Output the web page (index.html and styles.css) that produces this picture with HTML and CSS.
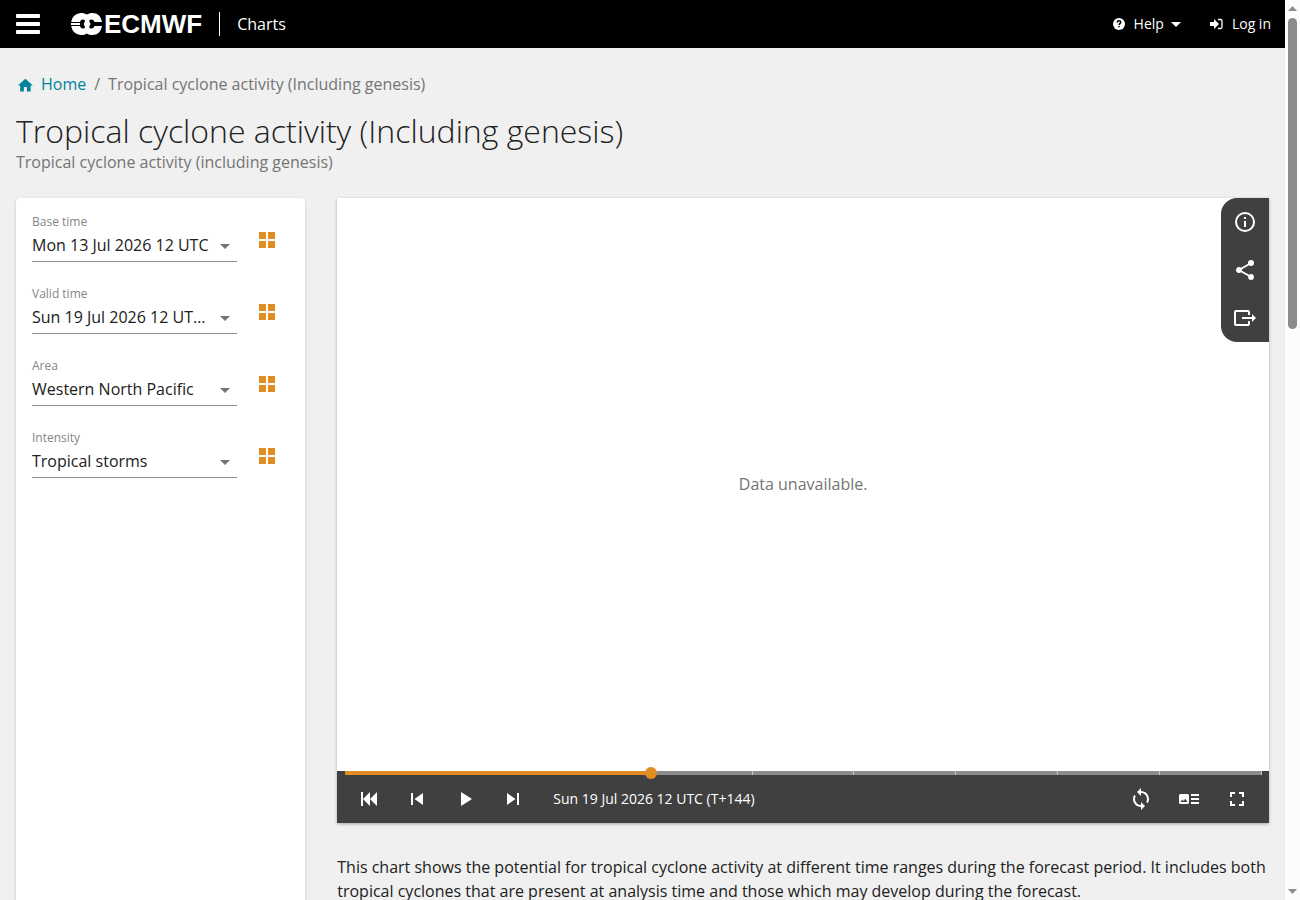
FILE: index.html
```html
<!DOCTYPE html>
<html lang="en">
<head>
<meta charset="UTF-8">
<meta name="viewport" content="width=device-width, initial-scale=1.0">
<title>Tropical cyclone activity (Including genesis) | ECMWF</title>
<link rel="stylesheet" href="styles.css">
</head>
<body>
<div class="page">
<header class="topbar">
  <button class="menu-btn" aria-label="Menu"><span></span><span></span><span></span></button>
  <a class="logo" href="#">
    <svg width="32" height="22" viewBox="0 0 32 22" aria-hidden="true">
      <path fill="#fff" d="M10.500 0c2 0 3.700.6 5.300 1.600C17.400.6 19.300 0 21.300 0 26.500 0 30 3.200 31 9h-7.500C22.800 7.200 21.800 6.500 20.500 6.500c-1.300 0-2 .5-2.300 1.500l1.300 3-1.300 3c.3 1 1 1.500 2.300 1.500 1.300 0 2.300-.7 3-2.500H31c-1 5.800-4.500 9-9.700 9-2 0-3.900-.6-5.500-1.600-1.600 1-3.300 1.600-5.300 1.600C5 22 1 18.500.3 13H9c.6 1.800 1.600 2.500 2.800 2.500 1.200 0 1.900-.5 2.200-1.500l-1.300-3L14 8c-.3-1-1-1.500-2.200-1.500C10.600 6.500 9.600 7.200 9 9H.3C1 3.500 5 0 10.500 0z"/>
      <path fill="#fff" d="M0 10h9v2H0z"/>
    </svg>
    <span>ECMWF</span>
  </a>
  <a class="app-name" href="#">Charts</a>
  <nav class="user-nav">
    <button class="nav-btn">
      <svg width="12" height="12" viewBox="0 0 12 12" aria-hidden="true"><circle cx="6" cy="6" r="6" fill="#fff"/><path d="M4.200 4.600C4.300 3.300 5 2.800 6 2.800s1.800.6 1.800 1.500C7.800 5.400 6.100 5.500 6.100 7" fill="none" stroke="#000" stroke-width="1.500"/><path d="M5.300 7.900h1.500v1.400H5.300z"/></svg>
      Help
      <svg class="caret" width="10" height="5" viewBox="0 0 10 5" aria-hidden="true"><path d="M0 0h10L5 5z" fill="#fff"/></svg>
    </button>
    <a class="nav-btn" href="#">
      <svg width="13" height="12" viewBox="0 0 13 12" aria-hidden="true"><path d="M0 4h4V1l5 5-5 5V8H0z" fill="#fff"/><path d="M8 1.500h2.500Q12 1.500 12 3v6q0 1.500-1.500 1.500H8" fill="none" stroke="#fff" stroke-width="1.300"/></svg>
      Log in
    </a>
  </nav>
</header>

<main>
  <div class="page-head">
    <nav class="breadcrumb">
      <a href="#"><svg width="18" height="18" viewBox="0 0 24 24" aria-hidden="true"><path d="M10.500 22v-6h4v6h5v-8h3l-10-9-10 9h3v8z" fill="currentColor"/></svg>Home</a>
      <span>/</span>
      <span>Tropical cyclone activity (Including genesis)</span>
    </nav>
    <h1>Tropical cyclone activity (Including genesis)</h1>
    <p class="subtitle">Tropical cyclone activity (including genesis)</p>
  </div>

  <div class="columns">
    <div class="side-col">
      <form class="card filters">
        <div class="filter">
          <div class="field">
            <label for="base">Base time</label>
            <select id="base"><option>Mon 13 Jul 2026 12 UTC</option></select>
          </div>
          <button type="button" class="grid-btn" aria-label="All base times"><svg width="24" height="24" viewBox="0 0 24 24"><path d="M4 4h7v7H4zM13 4h7v7h-7zM4 13h7v7H4zM13 13h7v7h-7z" fill="currentColor"/></svg></button>
        </div>
        <div class="filter">
          <div class="field">
            <label for="valid">Valid time</label>
            <select id="valid"><option>Sun 19 Jul 2026 12 UTC (T+144)</option></select>
          </div>
          <button type="button" class="grid-btn" aria-label="All valid times"><svg width="24" height="24" viewBox="0 0 24 24"><path d="M4 4h7v7H4zM13 4h7v7h-7zM4 13h7v7H4zM13 13h7v7h-7z" fill="currentColor"/></svg></button>
        </div>
        <div class="filter">
          <div class="field">
            <label for="area">Area</label>
            <select id="area"><option>Western North Pacific</option></select>
          </div>
          <button type="button" class="grid-btn" aria-label="All areas"><svg width="24" height="24" viewBox="0 0 24 24"><path d="M4 4h7v7H4zM13 4h7v7h-7zM4 13h7v7H4zM13 13h7v7h-7z" fill="currentColor"/></svg></button>
        </div>
        <div class="filter">
          <div class="field">
            <label for="intensity">Intensity</label>
            <select id="intensity"><option>Tropical storms</option></select>
          </div>
          <button type="button" class="grid-btn" aria-label="All intensities"><svg width="24" height="24" viewBox="0 0 24 24"><path d="M4 4h7v7H4zM13 4h7v7h-7zM4 13h7v7H4zM13 13h7v7h-7z" fill="currentColor"/></svg></button>
        </div>
      </form>
    </div>

    <div class="main-col">
      <section class="viewer">
        <div class="chart">
          <p>Data unavailable.</p>
          <div class="tools">
            <button aria-label="Information"><svg width="24" height="24" viewBox="0 0 24 24"><path d="M11 9h2V7h-2zM12 20a8 8 0 1 1 0-16 8 8 0 0 1 0 16zM12 2a10 10 0 1 0 0 20 10 10 0 0 0 0-20zM11 17h2v-6h-2z" fill="currentColor"/></svg></button>
            <button aria-label="Share"><svg width="24" height="24" viewBox="0 0 24 24"><path d="M18 16.080c-.76 0-1.440.3-1.960.77L8.910 12.700c.05-.23.09-.46.09-.7s-.04-.47-.09-.7l7.050-4.110c.54.5 1.250.81 2.040.81a3 3 0 1 0-3-3c0 .24.04.47.09.7L8.040 9.810A3 3 0 1 0 6 15c.79 0 1.500-.31 2.040-.81l7.120 4.150c-.05.21-.08.43-.08.66a2.920 2.920 0 1 0 2.920-2.920z" fill="currentColor"/></svg></button>
            <button aria-label="Export"><svg width="24" height="24" viewBox="0 0 24 24"><path d="M16 9V6Q16 5 15 5H3Q2 5 2 6v12q0 1 1 1h12q1 0 1-1v-3" fill="none" stroke="currentColor" stroke-width="2"/><path d="M9 11h10V8l4 4-4 4v-3H9z" fill="currentColor"/></svg></button>
          </div>
        </div>
        <div class="player">
          <input class="timeline" type="range" min="0" max="9" value="3" aria-label="Time step">
          <div class="controls">
            <button aria-label="First"><svg width="24" height="24" viewBox="0 0 24 24"><path d="M4 5h2v14H4zM13 5v14l-7-7zM20 5v14l-7-7z" fill="currentColor"/></svg></button>
            <button aria-label="Previous"><svg width="24" height="24" viewBox="0 0 24 24"><path d="M6 6h2v12H6zM9.500 12l8.500 6V6z" fill="currentColor"/></svg></button>
            <button aria-label="Play"><svg width="24" height="24" viewBox="0 0 24 24"><path d="M8 5v14l11-7z" fill="currentColor"/></svg></button>
            <button aria-label="Next"><svg width="24" height="24" viewBox="0 0 24 24"><path d="M6 18l8.500-6L6 6zM16 6h2v12h-2z" fill="currentColor"/></svg></button>
            <span class="step">Sun 19 Jul 2026 12 UTC (T+144)</span>
            <button aria-label="Loop"><svg width="24" height="24" viewBox="0 0 24 24"><path d="M12 4V1L8 5l4 4V6c3.310 0 6 2.690 6 6 0 1.010-.25 1.970-.7 2.800l1.460 1.460C19.540 15.030 20 13.570 20 12c0-4.420-3.580-8-8-8zm0 14c-3.310 0-6-2.690-6-6 0-1.010.25-1.970.7-2.800L5.240 7.740C4.460 8.970 4 10.430 4 12c0 4.420 3.580 8 8 8v3l4-4-4-4v3z" fill="currentColor"/></svg></button>
            <button aria-label="Legend"><svg width="24" height="24" viewBox="0 0 24 24"><path fill-rule="evenodd" d="M3.500 7h7Q12 7 12 8.500v7q0 1.500-1.500 1.500h-7Q2 17 2 15.500v-7Q2 7 3.500 7zM3.500 15h7L8.200 11.800 6.500 14l-1.200-1.400zM14 7h8v2h-8zM14 11h8v2h-8zM14 15h8v2h-8z" fill="currentColor"/></svg></button>
            <button aria-label="Full screen"><svg width="24" height="24" viewBox="0 0 24 24"><path d="M7 14H5v5h5v-2H7zM5 10h2V7h3V5H5zM17 17h-3v2h5v-5h-2zM14 5v2h3v3h2V5z" fill="currentColor"/></svg></button>
          </div>
        </div>
      </section>
      <p class="description">This chart shows the potential for tropical cyclone activity at different time ranges during the forecast period. It includes both tropical cyclones that are present at analysis time and those which may develop during the forecast.</p>
    </div>
  </div>
</main>
</div>
<div class="scrollbar" aria-hidden="true">
  <svg width="9" height="5" viewBox="0 0 9 5"><path d="M0 5h9L4.500 0z" fill="#8b8b8b"/></svg>
  <div class="track"><div class="thumb"></div></div>
  <svg width="9" height="5" viewBox="0 0 9 5"><path d="M0 0h9L4.500 5z" fill="#8b8b8b"/></svg>
</div>
</body>
</html>
```
FILE: styles.css
```css
* {
  box-sizing: border-box;
}
body {
  display: flex;
  height: 100vh;
  margin: 0;
  background: #f0f0f0;
  color: #212121;
  font-family: "Open Sans", "Noto Sans", sans-serif;
  font-size: 16px;
  line-height: 24px;
}
h1, p {
  margin: 0;
}
a {
  color: inherit;
  text-decoration: none;
}
button {
  display: flex;
  align-items: center;
  justify-content: center;
  padding: 0;
  border: 0;
  background: none;
  color: inherit;
  font: inherit;
  cursor: pointer;
}
svg {
  display: block;
  flex: none;
}

/* the page scrolls beside its own scrollbar */
.page {
  display: flex;
  flex: 1;
  flex-direction: column;
  min-width: 0;
  overflow-y: auto;
  scrollbar-width: none;
}
.scrollbar {
  display: flex;
  flex-direction: column;
  align-items: center;
  width: 15px;
  padding: 6px 0;
  background: #fcfcfc;
}
.track {
  flex: 1;
  width: 9px;
  padding: 7px 0;
}
.thumb {
  height: 36%;
  border-radius: 5px;
  background: #8b8b8b;
}

/* header */
.topbar {
  display: flex;
  flex: none;
  align-items: center;
  height: 48px;
  padding: 0 14px 0 16px;
  background: #000;
  color: #fff;
}
.menu-btn {
  flex-direction: column;
  gap: 4px;
  width: 24px;
}
.menu-btn span {
  width: 24px;
  height: 4px;
  border-radius: 1px;
  background: #fff;
}
.logo {
  display: flex;
  align-items: center;
  gap: 1px;
  margin-left: 31px;
  font-family: "Liberation Sans", Arial, sans-serif;
  font-size: 26px;
  font-weight: bold;
}
.app-name {
  margin-left: 17px;
  padding-left: 17px;
  border-left: 1px solid #fff;
}
.user-nav {
  display: flex;
  gap: 29px;
  margin-left: auto;
  font-size: 14px;
}
.nav-btn {
  display: flex;
  align-items: center;
  gap: 9px;
}
.caret {
  margin-left: -2px;
}

/* page title */
.page-head {
  padding: 24px 16px;
}
.breadcrumb {
  display: flex;
  gap: 8px;
  color: #757575;
}
.breadcrumb a {
  display: flex;
  align-items: center;
  gap: 7px;
  color: #00839b;
}
h1 {
  margin-top: 16px;
  font-size: 32px;
  font-weight: 300;
  line-height: 38px;
}
.subtitle {
  color: #757575;
}

/* layout */
main {
  display: flex;
  flex: 1;
  flex-direction: column;
}
.columns {
  display: flex;
  flex: 1;
}
.side-col {
  display: flex;
  width: 25%;
  padding: 0 16px;
}
.main-col {
  width: 75%;
  padding: 0 16px;
}
.card {
  width: 100%;
  border-radius: 4px 4px 0 0;
  background: #fff;
  box-shadow: 0 1px 3px rgba(0, 0, 0, 0.2);
}

/* filters */
.filters {
  padding: 13px 16px;
}
.filter {
  display: flex;
  align-items: center;
  gap: 18px;
  height: 72px;
  padding-bottom: 14px;
}
.field {
  flex: 1;
  min-width: 0;
  height: 58px;
}
.field label {
  display: block;
  color: #858585;
  font-size: 12px;
  line-height: 22px;
}
.field select {
  display: block;
  width: 100%;
  height: 29px;
  padding: 0 28px 6px 0;
  border: 0;
  border-bottom: 1px solid #8c8c8c;
  border-radius: 0;
  appearance: none;
  background: url("data:image/svg+xml,%3Csvg xmlns='http://www.w3.org/2000/svg' width='10' height='5'%3E%3Cpath d='M0 0h10L5 5z' fill='%23757575'/%3E%3C/svg%3E") no-repeat right 7px top 11px;
  color: #212121;
  font: inherit;
  text-overflow: ellipsis;
}
.grid-btn {
  width: 24px;
  height: 24px;
  margin-right: 10px;
  color: #e18d22;
}

/* chart viewer */
.viewer {
  box-shadow: 0 1px 3px rgba(0, 0, 0, 0.3);
}
.chart {
  position: relative;
  display: flex;
  align-items: center;
  justify-content: center;
  min-height: 573px;
  padding-bottom: 2px;
  background: #fff;
  color: #757575;
}
.tools {
  position: absolute;
  top: 0;
  right: 0;
  border-radius: 16px 0 0 16px;
  background: #404040;
  color: #fff;
}
.tools button,
.controls button {
  width: 48px;
  height: 48px;
}
.player {
  background: #404040;
  color: #fff;
}
.timeline {
  position: relative;
  display: block;
  width: calc(100% - 3px);
  height: 12px;
  margin: -4px 1px -4px 2px;
  appearance: none;
  background:
    linear-gradient(#e18d22, #e18d22) 6px center / calc((100% - 12px) / 3) 4px no-repeat,
    repeating-linear-gradient(to right, #8c8c8c 0, #8c8c8c calc(100% / 9 - 1px), #c4c4c4 calc(100% / 9 - 1px), #c4c4c4 calc(100% / 9)) center / calc(100% - 12px) 4px no-repeat;
}
.timeline::-webkit-slider-thumb {
  appearance: none;
  width: 12px;
  height: 12px;
  border-radius: 50%;
  background: #e18d22;
}
.controls {
  display: flex;
  align-items: center;
  height: 48px;
  padding: 0 8px;
}
.step {
  margin: 0 auto 0 16px;
  font-size: 14px;
}
.description {
  margin-top: 32px;
}
```
